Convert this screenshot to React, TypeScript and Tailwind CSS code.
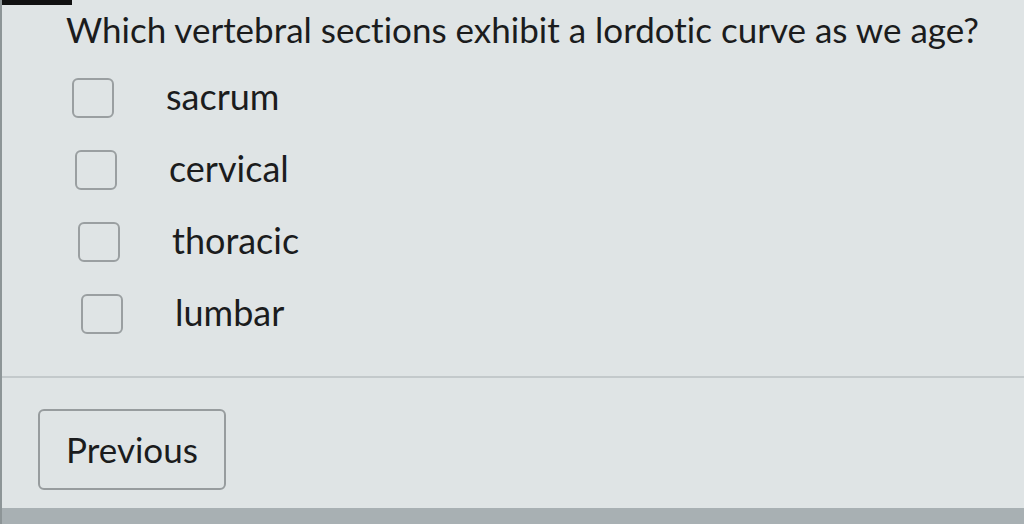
const options = ["sacrum", "cervical", "thoracic", "lumbar"];

export default function App() {
  return (
    <div
      className="relative h-[524px] w-[1024px] overflow-hidden bg-[#dfe4e5] text-[#1b1c1d] [font-variant-ligatures:none]"
      style={{ fontFamily: "Lato, 'Open Sans', sans-serif" }}
    >
      {/* tab marker at the top-left */}
      <div className="absolute left-0 top-0 h-[5px] w-[72px] bg-[#111]" />
      <div className="absolute left-0 top-0 h-full w-[2px] bg-[#8d9597]" />

      <div className="flex h-[508px] flex-col">
        <div className="pl-[66px] pt-[7px]">
          <h1 className="text-[35px] leading-[44px]">
            Which vertebral sections exhibit a lordotic curve as we age?
          </h1>

          <ul className="mt-[26px] flex flex-col gap-[30px]">
            {options.map((label, i) => (
              <li key={label} className="flex h-[42px] items-center" style={{ paddingLeft: 6 + i * 3 }}>
                <span className="h-[40px] w-[42px] rounded-[6px] border-2 border-[#9a9fa1]" />
                <span className="ml-[52px] pb-[4px] text-[36px] leading-none">{label}</span>
              </li>
            ))}
          </ul>
        </div>

        <div className="mt-[41px] h-[2px] bg-[#c3c9cb]" />

        <div className="pl-[38px] pt-[31px]">
          <button className="flex h-[81px] w-[188px] items-center justify-center rounded-[6px] border-2 border-[#979c9e] text-[35px]">
            Previous
          </button>
        </div>
      </div>

      <div className="h-[16px] bg-[#a8b0b3]" />
    </div>
  );
}
